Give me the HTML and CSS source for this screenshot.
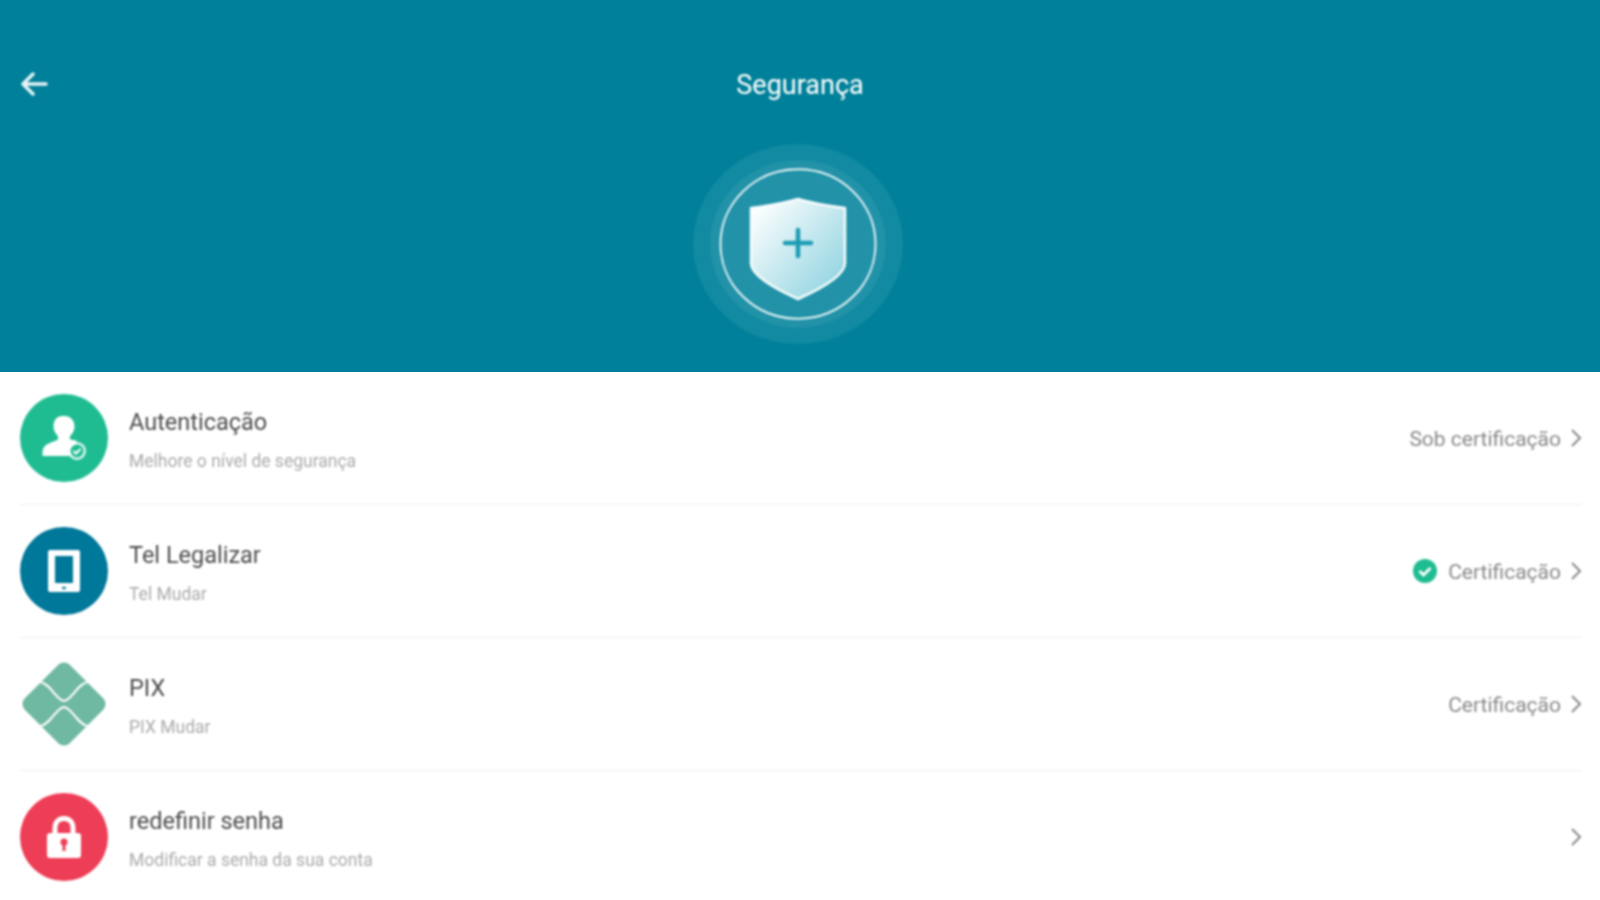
FILE: index.html
```html
<!DOCTYPE html>
<html lang="pt">
<head>
    <title>Segurança</title>
    <meta charset="UTF-8">
    <link rel="stylesheet" href="styles.css">
</head>
<body>
    <div class="screen">
        <div class="header">
            <div class="topbar">
                <svg class="back" width="30" height="26" viewBox="0 0 30 26"><path d="M27 13H4M14 3L4 13l10 10" fill="none" stroke="#e6f4f6" stroke-width="3.500" stroke-linecap="round" stroke-linejoin="round"/></svg>
                <span class="page-title">Segurança</span>
            </div>
            <div class="hero">
                <svg width="214" height="214" viewBox="0 0 214 214">
                    <defs>
                        <linearGradient id="shieldFill" x1="0.05" y1="0.05" x2="0.95" y2="0.9">
                            <stop offset="0" stop-color="#ffffff"/>
                            <stop offset="1" stop-color="#8fd3e0"/>
                        </linearGradient>
                    </defs>
                    <ellipse cx="107" cy="107" rx="105" ry="100" fill="#118aa2"/>
                    <ellipse cx="107" cy="107" rx="88" ry="84" fill="#2192a8"/>
                    <ellipse cx="107" cy="107" rx="77.500" ry="74.700" fill="#2192a8" stroke="#e4f2f4" stroke-width="2"/>
                    <path d="M107 62C124 67 137 69 154 71V126C154 140 125 154 107 162C89 154 60 140 60 126V71C77 69 90 67 107 62Z" fill="url(#shieldFill)" stroke="#f8fdfd" stroke-width="2.500" stroke-linejoin="round"/>
                    <path d="M107 93V119M94 106H120" stroke="#1c9db4" stroke-width="4.500" stroke-linecap="round"/>
                </svg>
            </div>
        </div>

        <div class="list">
            <div class="row">
                <div class="icon green">
                    <svg width="88" height="88" viewBox="0 0 88 88">
                        <path transform="translate(-1.500 0)" d="M44 22c-6 0-9 4.500-9 10 0 4 1.500 7.500 4.500 10v3.500C33 49 24 49.500 24 58.500V62h34V46.500c-2-.5-5-.5-6.500-1V42c3-2.500 4.500-6 4.500-10 0-5.500-4-10-10-10z" fill="#fff"/>
                        <circle cx="57" cy="57" r="9" fill="#fff" opacity="0.85"/>
                        <circle cx="57" cy="57" r="6.500" fill="#1fbc92"/>
                        <path d="M53.500 57l2.500 2.500 4.500-4.500" fill="none" stroke="#fff" stroke-width="2.200"/>
                    </svg>
                </div>
                <div class="info">
                    <div class="name">Autenticação</div>
                    <div class="desc">Melhore o nível de segurança</div>
                </div>
                <span class="state">Sob certificação</span>
                <svg class="chevron" width="12" height="20" viewBox="0 0 12 20"><path d="M2 2l8 8-8 8" fill="none" stroke="#888" stroke-width="2"/></svg>
            </div>

            <div class="row">
                <div class="icon teal">
                    <svg width="88" height="88" viewBox="0 0 88 88">
                        <rect x="28" y="23" width="32" height="42" rx="2" fill="#fff"/>
                        <rect x="35" y="29" width="18" height="27" fill="#00789a"/>
                        <rect x="42" y="60" width="4" height="2" fill="#00789a"/>
                    </svg>
                </div>
                <div class="info">
                    <div class="name">Tel Legalizar</div>
                    <div class="desc">Tel Mudar</div>
                </div>
                <svg class="state-check" width="24" height="24" viewBox="0 0 24 24"><circle cx="12" cy="12" r="12" fill="#1fbc92"/><path d="M6.500 12l4 4 7-7" fill="none" stroke="#fff" stroke-width="2.800"/></svg>
                <span class="state">Certificação</span>
                <svg class="chevron" width="12" height="20" viewBox="0 0 12 20"><path d="M2 2l8 8-8 8" fill="none" stroke="#888" stroke-width="2"/></svg>
            </div>

            <div class="row">
                <div class="icon">
                    <svg width="88" height="88" viewBox="0 0 88 88">
                        <path d="M44 10.500L77.500 44 44 77.500 10.500 44Z" fill="#6fb8a2" stroke="#6fb8a2" stroke-width="16" stroke-linejoin="round"/>
                        <path d="M20 22c10 1 16 18 24 19 8-1 14-18 24-19M20 66c10-1 16-18 24-19 8 1 14 18 24 19" fill="none" stroke="#fff" stroke-width="2.200"/>
                    </svg>
                </div>
                <div class="info">
                    <div class="name">PIX</div>
                    <div class="desc">PIX Mudar</div>
                </div>
                <span class="state">Certificação</span>
                <svg class="chevron" width="12" height="20" viewBox="0 0 12 20"><path d="M2 2l8 8-8 8" fill="none" stroke="#888" stroke-width="2"/></svg>
            </div>

            <div class="row last">
                <div class="icon red">
                    <svg width="88" height="88" viewBox="0 0 88 88">
                        <path d="M35 42v-7c0-6 4-9.500 9-9.500s9 3.500 9 9.500v7" fill="none" stroke="#fff" stroke-width="5"/>
                        <rect x="27" y="40" width="34" height="25" rx="3" fill="#fff"/>
                        <circle cx="44" cy="49" r="3.500" fill="#ee3d56"/>
                        <rect x="42.500" y="50" width="3" height="8" fill="#ee3d56"/>
                    </svg>
                </div>
                <div class="info">
                    <div class="name">redefinir senha</div>
                    <div class="desc">Modificar a senha da sua conta</div>
                </div>
                <svg class="chevron" width="12" height="20" viewBox="0 0 12 20"><path d="M2 2l8 8-8 8" fill="none" stroke="#888" stroke-width="2"/></svg>
            </div>
        </div>
    </div>
</body>
</html>
```

FILE: styles.css
```css
html, body {
    margin: 0;
    height: 100%;
    overflow: hidden;
    background: #fff;
}

.screen {
    height: 900px;
    overflow: hidden;
    font-family: Roboto, "Liberation Sans", sans-serif;
}

/* the whole shot is a soft upscale, the header colour itself stays flat */
.topbar, .hero, .list {
    filter: blur(0.9px);
}

.header {
    height: 372px;
    background: #00809a;
    display: flex;
    flex-direction: column;
}

.topbar {
    height: 60px;
    margin-top: 55px;
    padding-left: 19px;
    display: flex;
    align-items: center;
}

.back {
    margin-top: -2px;
}

.page-title {
    flex: 1;
    text-align: center;
    margin-right: 49px;
    color: #fff;
    font-size: 27px;
}

.hero {
    margin-top: 22px;
    padding-right: 4px;
    display: flex;
    justify-content: center;
}

.row {
    height: 132px;
    margin-left: 20px;
    margin-right: 18px;
    border-bottom: 1px solid #f0f0f0;
    display: flex;
    align-items: center;
}

.row.last {
    border-bottom: 0;
}

.icon {
    width: 88px;
    height: 88px;
    border-radius: 50%;
    flex: none;
}

.icon svg {
    display: block;
}

.icon.green {
    background: #1fbc92;
}

.icon.teal {
    background: #00789a;
}

.icon.red {
    background: #ee3d56;
}

.info {
    flex: 1;
    margin-left: 21px;
    padding-top: 4px;
}

.name {
    color: #4c4c4c;
    font-size: 23.500px;
    line-height: 26px;
}

.desc {
    margin-top: 16px;
    color: #aaa;
    font-size: 17.500px;
    line-height: 20px;
}

.state {
    margin-top: 2px;
    color: #888;
    font-size: 21px;
}

.state-check {
    margin-right: 11px;
}

.chevron {
    margin-left: 9px;
}
```
